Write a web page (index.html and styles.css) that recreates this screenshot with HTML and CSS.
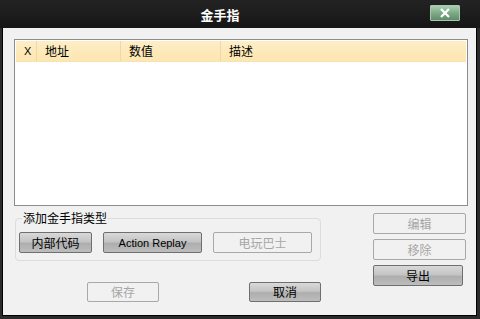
FILE: index.html
```html
<!DOCTYPE html>
<html lang="zh-CN">
<head>
    <meta charset="UTF-8">
    <title>金手指</title>
    <link rel="stylesheet" href="styles.css">
</head>
<body>
    <div class="window">
        <div class="titlebar">
            <span class="title">金手指</span>
            <button class="close">
                <svg width="14" height="10" viewBox="0 0 14 10"><path d="M3 1 L11 9 M11 1 L3 9" stroke="#fff" stroke-width="2.2"/></svg>
            </button>
        </div>

        <div class="content">
            <div class="listbox">
                <div class="list-head">
                    <div class="col col-x">X</div>
                    <div class="col col-addr">地址</div>
                    <div class="col col-val">数值</div>
                    <div class="col col-desc">描述</div>
                </div>
            </div>

            <div class="lower">
                <div class="left">
                    <fieldset class="group">
                        <legend>添加金手指类型</legend>
                        <div class="group-row">
                            <button class="btn btn-sm">内部代码</button>
                            <button class="btn btn-lg latin">Action Replay</button>
                            <button class="btn btn-lg" disabled>电玩巴士</button>
                        </div>
                    </fieldset>
                    <div class="footer">
                        <button class="btn btn-sm" disabled>保存</button>
                        <button class="btn btn-sm">取消</button>
                    </div>
                </div>

                <div class="right">
                    <button class="btn btn-side" disabled>编辑</button>
                    <button class="btn btn-side" disabled>移除</button>
                    <button class="btn btn-side btn-export">导出</button>
                </div>
            </div>
        </div>
    </div>
</body>
</html>
```

FILE: styles.css
```css
body {
    margin: 0;
    background-color: #262626;
    font-family: "Noto Sans CJK SC", "Liberation Sans", sans-serif;
    font-size: 12px;
}
.window {
    width: 480px;
    height: 319px;
    box-sizing: border-box;
    display: flex;
    flex-direction: column;
    background-color: #2b2b2b;
    padding: 0 3px 3px 2px;
}
.titlebar {
    height: 28px;
    flex: none;
    display: flex;
    align-items: flex-start;
    background: linear-gradient(#232323, #161616);
    margin: 0 -3px 0 -2px;
    padding: 0 20px 0 0;
}
.title {
    flex: 1;
    text-align: center;
    color: #fff;
    font-weight: bold;
    font-size: 13px;
    line-height: 30px;
    padding-left: 10px;
}
.close {
    margin-top: 5px;
    width: 30px;
    height: 16px;
    padding: 0;
    border: 1px solid #a9c8af;
    border-radius: 1px;
    background: linear-gradient(#a7cfae, #7eaa88 50%, #5f8d6a);
    display: flex;
    align-items: center;
    justify-content: center;
}
.content {
    flex: 1;
    background-color: #f1f1f1;
    border: 1px solid #000;
    border-top: none;
    padding: 11px 0 0 11px;
}
.listbox {
    width: 454px;
    height: 167px;
    box-sizing: border-box;
    background-color: #fff;
    border: 1px solid #8c8c8c;
    padding: 1px 1px 0 1px;
}
.list-head {
    display: flex;
    height: 20px;
    background: linear-gradient(#fdeec6, #fde6b0);
    border-bottom: 1px solid #f6e2b3;
    line-height: 20px;
}
.col {
    border-right: 1px solid #f1d9a4;
    box-sizing: border-box;
    padding-left: 8px;
    color: #000;
}
.col-x {
    width: 21px;
    padding-left: 8px;
    font-family: "Liberation Sans", sans-serif;
    font-size: 11px;
}
.col-addr {
    width: 84px;
}
.col-val {
    width: 100px;
}
.col-desc {
    flex: 1;
    border-right: none;
}
.lower {
    display: flex;
}
.left {
    width: 306px;
    margin-left: 1px;
}
.group {
    margin: 5px 0 0 0;
    padding: 7px 3px 8px 3px;
    border: 1px solid #dcdcdc;
    border-radius: 4px;
    height: 50px;
    box-sizing: border-box;
    min-width: 0;
}
.group legend {
    padding: 0 1px;
    margin-left: 3px;
    line-height: 14px;
    color: #000;
}
.group-row {
    display: flex;
    gap: 11px;
}
.btn {
    height: 21px;
    box-sizing: border-box;
    padding: 0;
    font-family: "Noto Sans CJK SC", "Liberation Sans", sans-serif;
    font-size: 12px;
    line-height: 18px;
    color: #000;
    border: 1px solid #6f6f6f;
    border-radius: 2px;
    background: linear-gradient(#d9d9d9, #c4c4c4 45%, #aeaeae 55%, #bdbdbd);
}
.btn:disabled {
    color: #a6a6a6;
    border-color: #a8a8a8;
    background: #f1f1f1;
}
.btn-sm {
    width: 73px;
}
.btn-lg {
    width: 99px;
}
.latin {
    font-family: "Liberation Sans", sans-serif;
    font-size: 11px;
}
.footer {
    display: flex;
    gap: 90px;
    margin: 21px 0 0 72px;
}
.footer .btn {
    width: 72px;
    height: 20px;
}
.right {
    margin-left: 52px;
    padding-top: 7px;
    display: flex;
    flex-direction: column;
    gap: 5px;
}
.btn-side {
    width: 93px;
}
.btn-export {
    width: 90px;
}
```
